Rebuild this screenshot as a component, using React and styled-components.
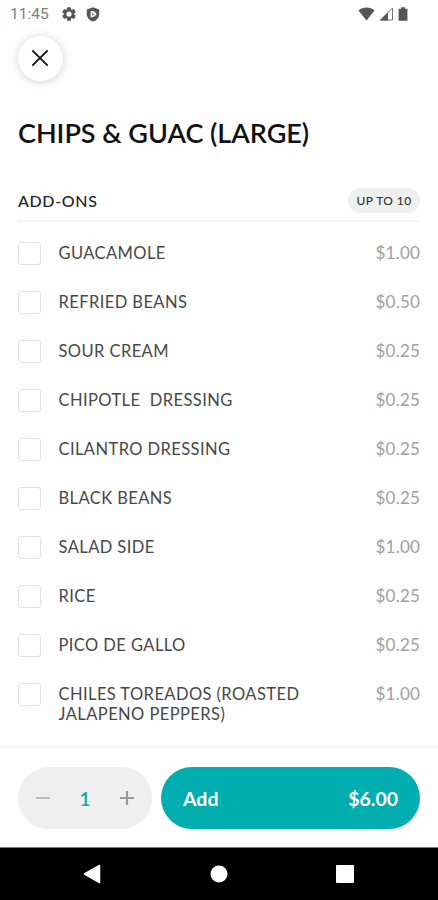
import styled, { createGlobalStyle } from "styled-components"

const addOns = [
  { name: "GUACAMOLE", price: "$1.00" },
  { name: "REFRIED BEANS", price: "$0.50" },
  { name: "SOUR CREAM", price: "$0.25" },
  { name: "CHIPOTLE  DRESSING", price: "$0.25" },
  { name: "CILANTRO DRESSING", price: "$0.25" },
  { name: "BLACK BEANS", price: "$0.25" },
  { name: "SALAD SIDE", price: "$1.00" },
  { name: "RICE", price: "$0.25" },
  { name: "PICO DE GALLO", price: "$0.25" },
  { name: "CHILES TOREADOS (ROASTED JALAPENO PEPPERS)", price: "$1.00" },
]

const teeth = [0, 60, 120, 180, 240, 300]

function StatusBar() {
  return (
    <Status>
      <Clock>11:45</Clock>
      <Notifications>
        <svg width="14" height="14" viewBox="0 0 14 14" fill="#555">
          {teeth.map((angle) => (
            <path
              key={angle}
              d="M5.2 0.2h3.6l0.5 3.2h-4.6z"
              transform={`rotate(${angle} 7 7)`}
            />
          ))}
          <circle cx="7" cy="7" r="3.8" fill="none" stroke="#555" strokeWidth="2.4" />
        </svg>
        <svg width="14" height="15" viewBox="0 0 14 15">
          <path
            d="M7 0.3L13.2 2.6V7c0 3.6-2.5 6.4-6.2 7.6C3.3 13.4 0.8 10.6 0.8 7V2.6z"
            fill="#555"
          />
          <path d="M4.6 3.9h3.2L10.8 7.2L7.8 9.8L4.6 10.4z" fill="#fff" />
          <path d="M6 5.7L8.6 7.2L6 8.7z" fill="#777" />
        </svg>
      </Notifications>
      <Signals>
        <svg width="17" height="14" viewBox="0 0 17 14">
          <path d="M0.5 3.4C5 -0.3 12 -0.3 16.5 3.4L8.5 13.5z" fill="#555" />
        </svg>
        <svg width="15" height="14" viewBox="0 0 15 14">
          <path d="M1.5 13L13.5 1V13z" fill="#fff" stroke="#777" strokeWidth="1" />
          <path d="M1 13.4L9 5.4V13.4z" fill="#555" />
        </svg>
        <svg width="10" height="14" viewBox="0 0 10 14">
          <path d="M3 0.3h4v1.4h2.4v12H0.6v-12h2.4z" fill="#555" />
        </svg>
      </Signals>
    </Status>
  )
}

function AddOn({ name, price }) {
  return (
    <Row>
      <Checkbox type="checkbox" aria-label={name} />
      <Name>{name}</Name>
      <Price>{price}</Price>
    </Row>
  )
}

function App() {
  return (
    <>
      <GlobalStyle />
      <Screen>
        <StatusBar />
        <CloseButton aria-label="Close">
          <svg width="18" height="18" viewBox="0 0 18 18">
            <path d="M1.3 1.3L16.7 16.7M16.7 1.3L1.3 16.7" stroke="#111" strokeWidth="1.8" />
          </svg>
        </CloseButton>
        <Content>
          <Title>CHIPS &amp; GUAC (LARGE)</Title>
          <SectionHeader>
            <SectionTitle>ADD-ONS</SectionTitle>
            <Limit>UP TO 10</Limit>
          </SectionHeader>
          <List>
            {addOns.map((item) => (
              <AddOn key={item.name} {...item} />
            ))}
          </List>
        </Content>
        <Footer>
          <Quantity>
            <QuantityButton aria-label="Decrease">
              <svg width="14" height="14" viewBox="0 0 14 14">
                <path d="M0 7H14" stroke="#bcbcbc" strokeWidth="2" />
              </svg>
            </QuantityButton>
            <Count>1</Count>
            <QuantityButton aria-label="Increase">
              <svg width="14" height="14" viewBox="0 0 14 14">
                <path d="M0 7H14M7 0V14" stroke="#999" strokeWidth="2.2" />
              </svg>
            </QuantityButton>
          </Quantity>
          <AddButton>
            <span>Add</span>
            <span>$6.00</span>
          </AddButton>
        </Footer>
        <NavBar>
          <svg width="18" height="20" viewBox="0 0 18 20">
            <path d="M1.5 10L16.5 1.5V18.5z" fill="#fff" stroke="#fff" strokeWidth="1.5" strokeLinejoin="round" />
          </svg>
          <svg width="18" height="18" viewBox="0 0 18 18">
            <circle cx="9" cy="9" r="8.5" fill="#fff" />
          </svg>
          <svg width="18" height="18" viewBox="0 0 18 18">
            <rect width="18" height="18" rx="1" fill="#fff" />
          </svg>
        </NavBar>
      </Screen>
    </>
  )
}

const GlobalStyle = createGlobalStyle`
  * {
    box-sizing: border-box;
  }
  body {
    margin: 0;
    background: #fff;
    font-family: Lato, sans-serif;
  }
  button {
    border: 0;
    padding: 0;
    font-family: inherit;
    cursor: pointer;
  }
  svg {
    display: block;
    flex-shrink: 0;
  }
`

const Screen = styled.div`
  display: flex;
  flex-direction: column;
  width: 438px;
  height: 900px;
  overflow: hidden;
  background: #fefefe;
`

const Status = styled.div`
  display: flex;
  align-items: center;
  height: 28px;
  padding: 0 30px 0 10px;
`

const Clock = styled.span`
  width: 52px;
  color: #808080;
  font-family: Roboto, sans-serif;
  font-size: 15.5px;
  line-height: 28px;
`

const Notifications = styled.div`
  display: flex;
  align-items: center;
  gap: 10px;
`

const Signals = styled.div`
  display: flex;
  align-items: center;
  gap: 4px;
  margin-left: auto;
`

const CloseButton = styled.button`
  display: flex;
  align-items: center;
  justify-content: center;
  width: 45px;
  height: 45px;
  margin: 8px 0 0 18px;
  padding: 0 1px 1px 0;
  flex-shrink: 0;
  border-radius: 50%;
  background: #fff;
  box-shadow: 0 1px 9px rgba(0, 0, 0, 0.18);
`

const Content = styled.main`
  flex: 1;
  min-height: 0;
  padding: 35px 18px 0;
`

const Title = styled.h1`
  margin: 0;
  color: #111;
  font-size: 27px;
  font-weight: 600;
  letter-spacing: -0.02px;
  line-height: 34px;
`

const SectionHeader = styled.div`
  display: flex;
  align-items: center;
  justify-content: space-between;
  height: 41px;
  margin-top: 31px;
  border-bottom: 2px solid #f5f5f5;
`

const SectionTitle = styled.h2`
  margin: 0;
  color: #222;
  font-size: 16px;
  font-weight: 500;
  letter-spacing: 0.65px;
`

const Limit = styled.span`
  width: 72px;
  border-radius: 13px;
  background: #efefef;
  color: #333;
  font-size: 12px;
  font-weight: 500;
  letter-spacing: 0.4px;
  line-height: 25px;
  text-align: center;
`

const List = styled.ul`
  margin: 0;
  padding: 21px 0 0;
  list-style: none;
`

const Row = styled.li`
  display: flex;
  align-items: flex-start;
  min-height: 22px;
  margin-bottom: 27px;
`

const Checkbox = styled.input`
  flex-shrink: 0;
  appearance: none;
  width: 23px;
  height: 23px;
  margin: -1px 17.5px 0 0;
  border: 1.5px solid #e2e2e2;
  border-radius: 3px;
  background: #fff;
`

const Name = styled.span`
  width: 260px;
  color: #484848;
  font-size: 16.5px;
  letter-spacing: 0.42px;
  line-height: 20px;
  white-space: pre-wrap;
`

const Price = styled.span`
  margin-left: auto;
  color: #a0a0a0;
  font-size: 17px;
  letter-spacing: 0.2px;
  line-height: 20px;
`

const Footer = styled.footer`
  display: flex;
  gap: 9px;
  height: 101px;
  padding: 18px 18px 0;
  flex-shrink: 0;
  border-top: 3px solid #f6f6f6;
`

const Quantity = styled.div`
  display: flex;
  align-items: center;
  justify-content: space-between;
  width: 134px;
  height: 62px;
  padding: 0 18px;
  border-radius: 31px;
  background: #efefef;
`

const QuantityButton = styled.button`
  background: none;
`

const Count = styled.span`
  color: #17a7a8;
  font-size: 19px;
  font-weight: 600;
`

const AddButton = styled.button`
  display: flex;
  align-items: center;
  justify-content: space-between;
  flex: 1;
  height: 62px;
  padding: 0 22px;
  border-radius: 31px;
  background: #00adaf;
  color: #fff;
  font-size: 19.5px;
  font-weight: 700;
`

const NavBar = styled.nav`
  display: flex;
  align-items: center;
  justify-content: space-between;
  height: 53px;
  padding: 0 84px 0 83px;
  flex-shrink: 0;
  border-top: 1px solid #777;
  background: #000;
`

export default App
